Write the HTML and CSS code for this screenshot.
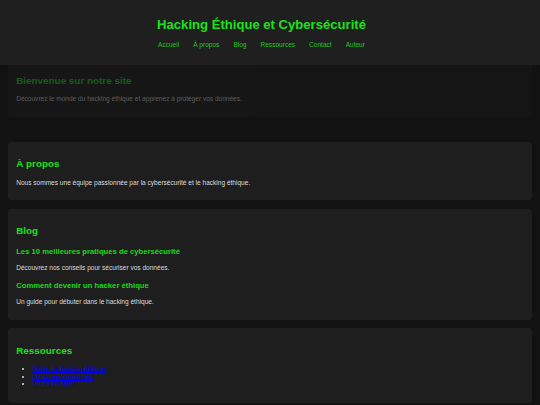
FILE: index.html
```html
<!DOCTYPE html>
<html lang="fr">
<head>
<meta charset="utf-8">
<title>Hacking Éthique et Cybersécurité</title>
<link rel="stylesheet" href="styles.css">
</head>
<body>
<header class="site-header">
  <h1 class="site-title">Hacking Éthique et Cybersécurité</h1>
  <nav>
    <ul class="nav-list">
      <li><a href="#accueil">Accueil</a></li>
      <li><a href="#apropos">À propos</a></li>
      <li><a href="#blog">Blog</a></li>
      <li><a href="#ressources">Ressources</a></li>
      <li><a href="#contact">Contact</a></li>
      <li><a href="#auteur">Auteur</a></li>
    </ul>
  </nav>
</header>
<main class="content">
  <section id="accueil" class="card hero">
    <h2>Bienvenue sur notre site</h2>
    <p>Découvrez le monde du hacking éthique et apprenez à protéger vos données.</p>
  </section>
  <section id="apropos" class="card">
    <h2>À propos</h2>
    <p>Nous sommes une équipe passionnée par la cybersécurité et le hacking éthique.</p>
  </section>
  <section id="blog" class="card">
    <h2>Blog</h2>
    <article>
      <h3>Les 10 meilleures pratiques de cybersécurité</h3>
      <p>Découvrez nos conseils pour sécuriser vos données.</p>
    </article>
    <article>
      <h3>Comment devenir un hacker éthique</h3>
      <p>Un guide pour débuter dans le hacking éthique.</p>
    </article>
  </section>
  <section id="ressources" class="card">
    <h2>Ressources</h2>
    <ul class="res-list">
      <li><a href="#outils">Outils de hacking éthique</a></li>
      <li><a href="#livres">Livres recommandés</a></li>
      <li><a href="#cours">Cours en ligne</a></li>
    </ul>
  </section>
</main>
</body>
</html>
```
FILE: styles.css
```css
html, body {
  margin: 0;
  padding: 0;
}

body {
  background: #121212;
  color: #dcdcdc;
  font-family: "Liberation Sans", Arial, sans-serif;
  font-size: 6.56px;
}

.site-header {
  background: #1f1f1f;
  text-align: center;
  padding: 8.2px 17px 8.2px 0;
  height: 48.6px;
}

.site-title {
  color: #1fe01f;
  font-size: 13.1px;
  font-weight: bold;
  margin: 8.8px 0;
}

.nav-list {
  list-style: none;
  margin: 0;
  padding: 0;
  display: flex;
  justify-content: center;
  gap: 14px;
}

.nav-list a {
  color: #26c426;
  text-decoration: none;
}

.content {
  display: flex;
  flex-direction: column;
  gap: 8.2px;
  padding: 0 8px;
}

.card {
  background: #1e1e1e;
  border-radius: 3px;
  padding: 8.2px;
}

.card h2 {
  color: #1fe01f;
  font-size: 9.9px;
  margin: 8.2px 0 9.4px;
}

.card h3 {
  color: #1fd81f;
  font-size: 7.68px;
  margin: 10.6px 0 8px;
}

.card p {
  margin: 6.56px 0;
}

.hero {
  opacity: 0.35;
  padding-top: 1.5px;
  border-radius: 0 0 3px 3px;
  margin-bottom: 17px;
}

.res-list {
  margin: 6.56px 0;
  padding-left: 16.4px;
}

.res-list li {
  line-height: 7.7px;
}

.res-list a {
  color: #0000ee;
}
```
